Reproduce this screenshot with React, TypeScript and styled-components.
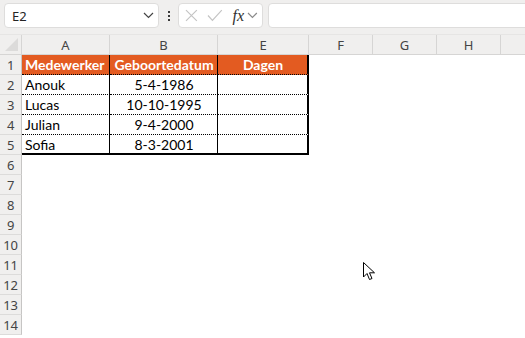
import React from "react";
import styled, { createGlobalStyle } from "styled-components";

const GlobalStyle = createGlobalStyle`
  html, body {
    margin: 0;
    padding: 0;
    background: #ffffff;
    overflow: hidden;
  }
  * { box-sizing: border-box; }
`;

const Page = styled.div`
  position: relative;
  width: 525px;
  height: 338px;
  overflow: hidden;
  background: #ffffff;
  font-family: "Noto Sans", "Open Sans", sans-serif;
`;

const Toolbar = styled.div`
  display: flex;
  align-items: center;
  height: 35px;
  padding: 3px 0 6px 4px;
  background: #f0efee;
  border-bottom: 1px solid #e6e5e4;
`;

const NameBox = styled.div`
  display: flex;
  align-items: center;
  justify-content: space-between;
  width: 155px;
  height: 25px;
  padding: 0 4px 0 7px;
  background: #ffffff;
  border: 1px solid #dedddc;
  border-radius: 4px;
  font-size: 13px;
  color: #242424;
`;

const Dots = styled.div`
  display: flex;
  flex-direction: column;
  gap: 2px;
  margin: 0 8px 0 9px;
  span {
    width: 2px;
    height: 2px;
    background: #3a3a3a;
  }
`;

const FormulaButtons = styled.div`
  display: flex;
  align-items: center;
  gap: 9px;
  width: 85px;
  height: 25px;
  padding: 0 4px 0 6px;
  background: #ffffff;
  border: 1px solid #dedddc;
  border-radius: 4px;
`;

const Fx = styled.span`
  font-family: "Liberation Serif", serif;
  font-style: italic;
  font-size: 16px;
  color: #303030;
  margin-left: 1px;
  margin-right: -6px;
`;

const FormulaInput = styled.div`
  flex: 1;
  height: 25px;
  margin-left: 5px;
  margin-right: -10px;
  background: #ffffff;
  border: 1px solid #dedddc;
  border-radius: 4px;
`;

const Sheet = styled.div`
  display: grid;
  grid-template-columns: 22px 88px 108px 91px 64px 64px 64px 64px;
  grid-auto-rows: 20px;
`;

const Corner = styled.div`
  position: relative;
  background: #f0efee;
  border-right: 1px solid #d6d5d4;
  border-bottom: 1px solid #d6d5d4;
  &::after {
    content: "";
    position: absolute;
    right: 3px;
    bottom: 3px;
    width: 0;
    height: 0;
    border-left: 13px solid transparent;
    border-bottom: 13px solid #dcdbda;
  }
`;

const ColHead = styled.div`
  display: flex;
  align-items: center;
  justify-content: center;
  background: #f0efee;
  border-right: 1px solid #d6d5d4;
  border-bottom: 1px solid #d6d5d4;
  font-size: 13px;
  color: #444444;
`;

const RowHead = styled.div`
  display: flex;
  align-items: center;
  justify-content: center;
  background: #f0efee;
  border-right: 1px solid #c6c5c4;
  border-bottom: 1px solid #dcdbda;
  font-size: 13px;
  color: #444444;
  letter-spacing: -0.3px;
`;

const Cell = styled.div<{ $head?: boolean; $align?: string; $edge?: "thin" | "thick" | "none"; $bottom?: "dotted" | "thick" | "none" }>`
  display: flex;
  align-items: center;
  justify-content: ${(p) => p.$align || "flex-start"};
  padding: 0 2px 0 3px;
  font-family: Lato, "Liberation Sans", sans-serif;
  font-size: 14px;
  font-weight: ${(p) => (p.$head ? 700 : 400)};
  color: ${(p) => (p.$head ? "#ffffff" : "#000000")};
  background: ${(p) => (p.$head ? "#e35b21" : "#ffffff")};
  border-right: ${(p) => (p.$edge === "thick" ? "2px solid #000" : p.$edge === "thin" ? "1px solid #000" : "none")};
  border-bottom: ${(p) => (p.$bottom === "thick" ? "2px solid #000" : p.$bottom === "dotted" ? "1px dotted #000" : "none")};
  white-space: nowrap;
`;

const Cursor = styled.svg`
  position: absolute;
  left: 363px;
  top: 262px;
`;

const columns = ["A", "B", "E", "F", "G", "H", ""];

const rows = [
  ["Anouk", "5-4-1986"],
  ["Lucas", "10-10-1995"],
  ["Julian", "9-4-2000"],
  ["Sofia", "8-3-2001"],
];

function Chevron({ color = "#555" }: { color?: string }) {
  return (
    <svg width="11" height="7" viewBox="0 0 11 7">
      <path d="M1 1 L5.5 5.5 L10 1" fill="none" stroke={color} strokeWidth="1.2" />
    </svg>
  );
}

function EmptyCells() {
  return (
    <>
      <Cell />
      <Cell />
      <Cell />
      <Cell />
    </>
  );
}

export default function App() {
  return (
    <Page>
      <GlobalStyle />
      <Toolbar>
        <NameBox>
          E2
          <Chevron color="#444" />
        </NameBox>
        <Dots>
          <span />
          <span />
          <span />
        </Dots>
        <FormulaButtons>
          <svg width="13" height="13" viewBox="0 0 13 13">
            <path d="M1 1 L12 12 M12 1 L1 12" stroke="#c4c4c4" strokeWidth="1.2" />
          </svg>
          <svg width="16" height="13" viewBox="0 0 16 13">
            <path d="M1 6.5 L5.5 11.5 L15 1" fill="none" stroke="#c4c4c4" strokeWidth="1.2" />
          </svg>
          <Fx>fx</Fx>
          <Chevron color="#8a8a8a" />
        </FormulaButtons>
        <FormulaInput />
      </Toolbar>

      <Sheet>
        <Corner />
        {columns.map((c, i) => (
          <ColHead key={i}>{c}</ColHead>
        ))}

        <RowHead>1</RowHead>
        <Cell $head $edge="thin" $bottom="dotted">Medewerker</Cell>
        <Cell $head $edge="thin" $bottom="dotted" $align="center">Geboortedatum</Cell>
        <Cell $head $edge="thick" $bottom="dotted" $align="center">Dagen</Cell>
        <EmptyCells />

        {rows.map(([name, date], i) => {
          const last = i === rows.length - 1;
          const bottom = last ? "thick" : "dotted";
          return (
            <React.Fragment key={name}>
              <RowHead>{i + 2}</RowHead>
              <Cell $edge="thin" $bottom={bottom}>{name}</Cell>
              <Cell $edge="thin" $bottom={bottom} $align="center">{date}</Cell>
              <Cell $edge="thick" $bottom={bottom} />
              <EmptyCells />
            </React.Fragment>
          );
        })}

        {[6, 7, 8, 9, 10, 11, 12, 13, 14].map((n) => (
          <React.Fragment key={n}>
            <RowHead>{n}</RowHead>
            <Cell />
            <Cell />
            <Cell />
            <EmptyCells />
          </React.Fragment>
        ))}
      </Sheet>

      <Cursor width="13" height="20" viewBox="0 0 13 20">
        <path
          d="M0.5 0.5 L0.5 15 L4 11.5 L6.5 17.5 L9 16.5 L6.5 10.8 L11.5 10.8 Z"
          fill="#ffffff"
          stroke="#000000"
          strokeWidth="1"
        />
      </Cursor>
    </Page>
  );
}
